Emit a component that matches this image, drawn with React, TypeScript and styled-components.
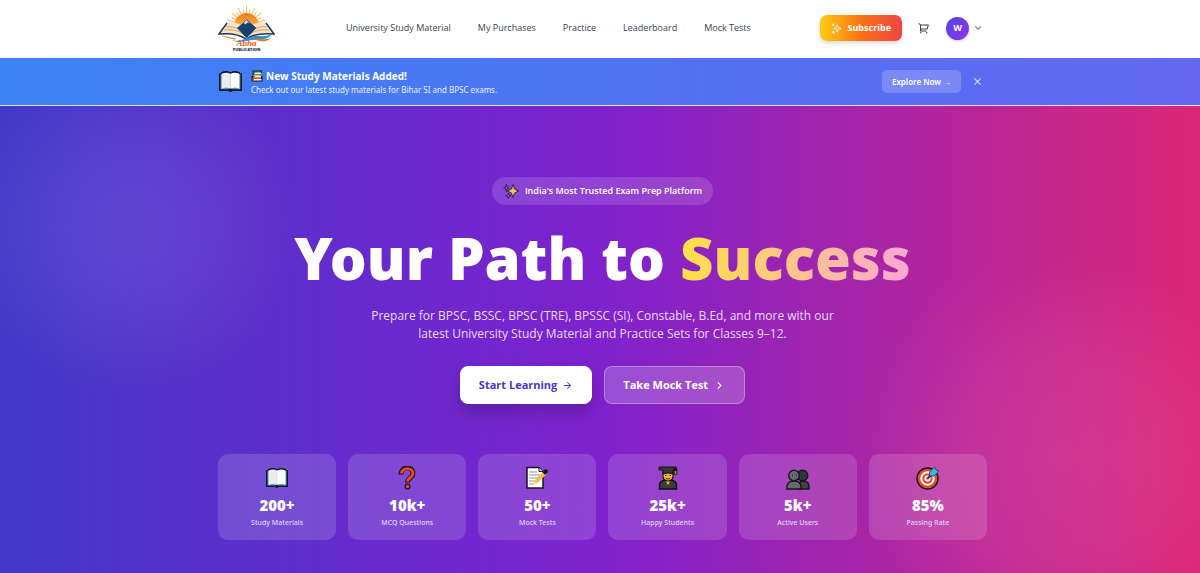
import React from "react";
import styled, { createGlobalStyle } from "styled-components";
import {
  RiArrowDownSLine,
  RiArrowRightLine,
  RiArrowRightSLine,
  RiCloseLine,
  RiShoppingCart2Line,
} from "react-icons/ri";

const GlobalStyle = createGlobalStyle`
  *, *::before, *::after { box-sizing: border-box; }
  body {
    margin: 0;
    background: #ffffff;
    font-family: "Open Sans", "Noto Sans", sans-serif;
    font-size: 9px;
    line-height: 14px;
    color: #374151;
  }
  h1, p { margin: 0; }
  button { font: inherit; border: 0; padding: 0; background: none; color: inherit; cursor: pointer; }
  a { color: inherit; text-decoration: none; }
  svg { display: block; flex: none; }
`;

const Page = styled.div`
  display: flex;
  flex-direction: column;
  min-height: 100vh;
  overflow: hidden;
`;

const Container = styled.div`
  width: 100%;
  max-width: 769px;
  margin: 0 auto;
`;

const Header = styled.header`
  padding-left: 5px;
  background: #ffffff;
`;

const HeaderRow = styled(Container)`
  display: flex;
  align-items: center;
  height: 58px;
  padding: 0 3px 2px 0;
`;

const Nav = styled.nav`
  display: flex;
  gap: 27px;
  margin: 0 auto 0 71px;
  font-weight: 500;
  white-space: nowrap;
`;

const Actions = styled.div`
  display: flex;
  align-items: center;
  gap: 16px;
`;

const SubscribeButton = styled.button`
  display: flex;
  align-items: center;
  justify-content: center;
  gap: 5px;
  height: 26px;
  padding: 0 11px;
  border-radius: 7px;
  background: linear-gradient(90deg, #facc15, #f97316 50%, #ef4444);
  box-shadow: 0 2px 4px rgba(0, 0, 0, 0.16);
  color: #ffffff;
  font-weight: 700;
`;

const IconButton = styled.button`
  display: flex;
  align-items: center;
  justify-content: center;
  color: #374151;
`;

const ProfileButton = styled.button`
  display: flex;
  align-items: center;
  gap: 3px;
  color: #6b7280;
`;

const Avatar = styled.span`
  display: grid;
  place-items: center;
  width: 23px;
  height: 23px;
  border-radius: 50%;
  background: linear-gradient(135deg, #4f46e5, #9333ea);
  box-shadow: 0 1px 3px rgba(0, 0, 0, 0.18);
  color: #ffffff;
  font-weight: 700;
`;

const Banner = styled.section`
  padding-left: 5px;
  border-bottom: 1px solid #dfe3fb;
  background: linear-gradient(90deg, #3b82f6, #6366f1);
  color: #ffffff;
`;

const BannerRow = styled(Container)`
  display: flex;
  align-items: center;
  height: 47px;
  gap: 8px;
  padding-right: 2px;
`;

const BannerCopy = styled.div`
  flex: 1;
  padding-top: 2px;
`;

const BannerTitle = styled.p`
  display: flex;
  align-items: center;
  gap: 3px;
  font-size: 10px;
  font-weight: 700;
`;

const BannerText = styled.p`
  font-family: "Noto Sans", "Open Sans", sans-serif;
  font-size: 8px;
  color: #e8f0ff;
`;

const ExploreButton = styled.button`
  height: 23px;
  padding: 0 10px;
  border-radius: 5px;
  background: rgba(255, 255, 255, 0.2);
  font-family: "Noto Sans", "Open Sans", sans-serif;
  font-size: 8px;
  font-weight: 600;
`;

const CloseButton = styled(IconButton)`
  width: 16px;
  height: 16px;
  color: #d6ddff;
`;

const Hero = styled.main`
  position: relative;
  flex: 1;
  padding: 71px 0 33px 5px;
  background: linear-gradient(90deg, #4338ca, #7e22ce 50%, #db2777);
  color: #ffffff;
  overflow: hidden;
`;

const Glow = styled.div<{ $side: "left" | "right" }>`
  position: absolute;
  border-radius: 50%;
  pointer-events: none;
  ${({ $side }) =>
    $side === "left"
      ? `left: -40px; top: -50px; width: 340px; height: 340px;
         background: radial-gradient(closest-side, rgba(255,255,255,0.09), rgba(255,255,255,0.06) 45%, transparent);`
      : `right: -60px; bottom: -90px; width: 410px; height: 410px;
         background: radial-gradient(closest-side, rgba(244,114,182,0.20), rgba(244,114,182,0.15) 50%, transparent);`}
`;

const HeroBody = styled(Container)`
  position: relative;
  display: flex;
  flex-direction: column;
  align-items: center;
  text-align: center;
`;

const Pill = styled.div`
  display: flex;
  align-items: center;
  gap: 6px;
  height: 28px;
  padding: 0 11px;
  border-radius: 14px;
  background: rgba(255, 255, 255, 0.15);
  font-weight: 600;
`;

const Title = styled.h1`
  margin-top: 21px;
  font-family: "Noto Sans", "Open Sans", sans-serif;
  font-size: 58px;
  font-weight: 900;
  line-height: 64px;
  white-space: nowrap;
`;

const Highlight = styled.span`
  background: linear-gradient(90deg, #fde047, #f9a8d4);
  background-clip: text;
  -webkit-background-clip: text;
  color: transparent;
`;

const Lead = styled.p`
  max-width: 490px;
  margin-top: 17px;
  font-size: 12px;
  line-height: 18px;
  color: #e9dcfc;
`;

const ButtonRow = styled.div`
  display: flex;
  gap: 12px;
  margin-top: 23px;
`;

const HeroButton = styled.button<{ $primary?: boolean }>`
  display: flex;
  align-items: center;
  gap: 5px;
  height: 38px;
  padding: 0 18px;
  border: 1px solid ${({ $primary }) => ($primary ? "#ffffff" : "rgba(255,255,255,0.3)")};
  border-radius: 8px;
  background: ${({ $primary }) => ($primary ? "#ffffff" : "rgba(255,255,255,0.2)")};
  box-shadow: ${({ $primary }) => ($primary ? "0 8px 16px rgba(0,0,0,0.2)" : "none")};
  color: ${({ $primary }) => ($primary ? "#4338ca" : "#ffffff")};
  font-size: 11px;
  font-weight: 700;
`;

const Stats = styled.div`
  display: grid;
  grid-template-columns: repeat(6, 1fr);
  gap: 12px;
  width: 100%;
  margin-top: 50px;
`;

const StatCard = styled.div`
  display: flex;
  flex-direction: column;
  align-items: center;
  height: 86px;
  padding-top: 12px;
  border-radius: 10px;
  background: rgba(255, 255, 255, 0.15);
`;

const StatValue = styled.strong`
  margin-top: 5px;
  font-family: "Noto Sans", "Open Sans", sans-serif;
  font-size: 15px;
  font-weight: 900;
  line-height: 20px;
`;

const StatLabel = styled.span`
  margin-top: 1px;
  font-family: "Noto Sans", "Open Sans", sans-serif;
  font-size: 7px;
  font-weight: 500;
  color: #dfd5fc;
`;

const Logo = () => (
  <svg width="57" height="48" viewBox="0 0 57 48" role="img" aria-label="Abha Publication">
    <defs>
      <linearGradient id="sun" x1="0" y1="0" x2="0" y2="1">
        <stop offset="0" stopColor="#f4741c" />
        <stop offset="1" stopColor="#fdc94a" />
      </linearGradient>
    </defs>
    <g stroke="#f9bd58" strokeWidth="1">
      {[-84, -72, -60, -48, -36, -24, -12, 0, 12, 24, 36, 48, 60, 72, 84].map((a, i) => (
        <path key={a} d={i % 2 ? "M28.500 9V2" : "M28.500 9V5"} transform={`rotate(${a} 28.500 22)`} />
      ))}
    </g>
    <path d="M16 22a12.500 13 0 0 1 25 0v4H16z" fill="url(#sun)" />
    <path d="M9 19c8-2 15 1 19.500 8C33 20 40 17 48 19l8 11c-10-1-20 0-27.500 5C21 30 11 29 1 30z" fill="#f8e4c4" />
    <path d="M9 19 1 30c10-1 20 0 27 5 7-5 17-6 28-5l-8-11" fill="none" stroke="#173a63" strokeWidth="1.500" />
    <path d="M8 23c9-1 16 2 20.500 9 5-7 12-10 20.500-9M6 26c10-1 17 1 22.500 7 6-6 13-8 22.500-7" fill="none" stroke="#b5854d" strokeWidth=".7" />
    <path d="M19 24l6-5 3.500-4 4 4 6 5-10 10z" fill="#17406f" />
    <path d="M25.500 19l3-3.500 3 4-2-1-1.500 2z" fill="#b7d7ed" />
    <path d="M12 35c9 5 16-2 25-3 6 0 12 1 17-2-5 7-13 5-20 6-7 1-14 4-22-1z" fill="#2990cf" />
    <path d="M33 35c8-2 12 2 20-1-5 5-11 3-20 1z" fill="#f06b21" />
    <path d="M4 32c5 0 9 3 14 3" fill="none" stroke="#e88b3c" strokeWidth="1.200" />
    <text x="28.500" y="42" textAnchor="middle" fontFamily="Liberation Serif, serif" fontStyle="italic" fontWeight="700" fontSize="9" fill="#ed5b22">Abha</text>
    <text x="28.500" y="47" textAnchor="middle" fontFamily="Open Sans, sans-serif" fontWeight="800" fontSize="4" fill="#1b2c53">PUBLICATION</text>
  </svg>
);

const SubscribeIcon = () => (
  <svg width="11" height="11" viewBox="0 0 24 24" fill="none" stroke="currentColor" strokeWidth="2" aria-hidden="true">
    <path d="M14 4l2 6 6 2-6 2-2 6-2-6-6-2 6-2z" />
    <path d="M5 1v6M2 4h6M5 17v6M2 20h6" />
  </svg>
);

const BookIcon = ({ size = 24 }: { size?: number }) => (
  <svg width={size} height={size} viewBox="0 0 24 24" aria-hidden="true">
    <path d="M1 4h2V3q5-2 9 0 4-2 9 0v1h2v17h-9l-2 1-2-1H1z" fill="#101820" />
    <path d="M2.500 5H4v13h7v1.500H2.500zM21.500 5H20v13h-7v1.500h8.500z" fill="#4b9fc3" />
    <path d="M3.500 4.500q5-2 8.500 0V19q-3.500-2-8.500 0z" fill="#e9ebed" />
    <path d="M12 4.500q4-2 8.500 0V19q-4.500-2-8.500 0z" fill="#ffffff" />
    <path d="M12 5v13" stroke="#d9dde0" strokeWidth=".7" />
  </svg>
);

const BooksIcon = () => (
  <svg width="12" height="12" viewBox="0 0 24 24" aria-hidden="true">
    <path d="M3 1h19v5h-2v6h3v11H1V12h2z" fill="#171b20" />
    <path d="M5 3h15v2H6v3h13v2H5z" fill="#47a35a" />
    <path d="M7 5h13v3H7zM8 12h12v3H8zM5 18h16v3H5z" fill="#f6f3e8" />
    <path d="M5 10h15v2H7v3h13v1H5z" fill="#f0b73f" />
    <path d="M3 16h17v2H5v4H3z" fill="#e64b35" />
  </svg>
);

const QuestionIcon = () => (
  <svg width="24" height="24" viewBox="0 0 24 24" fill="none" aria-hidden="true">
    <path d="M6 8.500C6 0 18 0 18 7.500c0 4-5.500 4.500-5.500 9" stroke="#16181b" strokeWidth="5" />
    <circle cx="12.500" cy="20.500" r="3" fill="#16181b" />
    <path d="M6.500 7.500C7 1 18 1 18 7.500c0 4-5.500 4.500-5.500 8" stroke="#ea4728" strokeWidth="3" />
    <circle cx="12.500" cy="20.500" r="1.800" fill="#ea4728" />
  </svg>
);

const MemoIcon = () => (
  <svg width="24" height="24" viewBox="0 0 24 24" aria-hidden="true">
    <path d="M2 1.500h12l4 4V22H2z" fill="#ffffff" stroke="#16181b" strokeWidth="1.500" />
    <path d="M14 1.500v4h4" fill="#d6d9db" stroke="#16181b" />
    <path d="M4 6h8M4 9h11M4 12h10M4 15h6M4 18h5" stroke="#85888c" strokeWidth=".9" />
    <path d="M8 19l2-5 9-9 3 3-10 9z" fill="#f3bd42" />
    <path d="M17.500 6l2-2.500q3.500-1 3.500 2.500l-3 3z" fill="#111820" />
    <path d="M8 19l2-4 2 2z" fill="#f6dca3" />
  </svg>
);

const StudentIcon = () => (
  <svg width="24" height="24" viewBox="0 0 24 24" aria-hidden="true">
    <path d="M3.500 23v-4q0-4 6-5h5q6 1 6 5v4z" fill="#393b3e" stroke="#111315" strokeWidth="1.500" />
    <path d="M9 14l3 5 3-5z" fill="#f7b92d" />
    <path d="M7 6h10v5q-1 4-5 4t-5-4z" fill="#f9b62c" stroke="#171a1c" strokeWidth="1.200" />
    <path d="M9 9.500h1.500M13.500 9.500H15M10 12.500q2 1 4 0" stroke="#211d18" strokeWidth=".9" fill="none" />
    <path d="M3 1h17v3h-3v4q-5-2-10 0V4H3z" fill="#34373a" stroke="#111315" />
    <path d="M19.500 2v7" stroke="#111315" strokeWidth="3.500" />
    <path d="M19.500 5v3.500" stroke="#c98525" strokeWidth="1.800" />
  </svg>
);

const UsersIcon = () => (
  <svg width="24" height="24" viewBox="0 0 24 24" stroke="#16181b" strokeWidth="1.400" aria-hidden="true">
    <path d="M12 23q0-8 5-8 6 0 6 6v2z" fill="#414447" />
    <circle cx="16.500" cy="9.500" r="5.300" fill="#323539" />
    <path d="M1 23v-3q1-5 7-5t7 5v3z" fill="#66696c" />
    <circle cx="8" cy="9.500" r="5.300" fill="#686b6e" />
    <path d="M6 9.500h.7M10 9.500h.7M15 9.500h.7M19 9.500h.7" />
  </svg>
);

const TargetIcon = () => (
  <svg width="24" height="24" viewBox="0 0 24 24" aria-hidden="true">
    <circle cx="11.500" cy="12.500" r="10.500" fill="#e64a32" stroke="#16181b" strokeWidth="1.400" />
    <circle cx="11.500" cy="12.500" r="6.200" fill="none" stroke="#ffffff" strokeWidth="2" />
    <circle cx="11.500" cy="12.500" r="2.200" fill="none" stroke="#ffffff" strokeWidth="1.700" />
    <path d="M11.500 12.500l5-5" stroke="#173b52" strokeWidth="2" />
    <path d="M13.500 10V6l5-5 1.500 3 3 1-5 5z" fill="#35b7e5" stroke="#173b52" strokeWidth=".8" />
  </svg>
);

const SparklesIcon = () => (
  <svg width="16" height="16" viewBox="0 0 24 24" stroke="#241b36" strokeWidth="1.300" aria-hidden="true">
    <path d="M15 2l2.300 7 6 3-6 3L15 22l-2.300-7-6-3 6-3z" fill="#f0c154" />
    <path d="M5 2l1.300 4 3 1-3 1.300L5 13 3.700 8.300 1 7l2.700-1z" fill="#4c7fc4" />
    <path d="M8 15l1 3 3 1-3 1-1 3-1-3-3-1 3-1z" fill="#a368d8" />
  </svg>
);

const links = ["University Study Material", "My Purchases", "Practice", "Leaderboard", "Mock Tests"];

const stats = [
  { icon: <BookIcon />, value: "200+", label: "Study Materials" },
  { icon: <QuestionIcon />, value: "10k+", label: "MCQ Questions" },
  { icon: <MemoIcon />, value: "50+", label: "Mock Tests" },
  { icon: <StudentIcon />, value: "25k+", label: "Happy Students" },
  { icon: <UsersIcon />, value: "5k+", label: "Active Users" },
  { icon: <TargetIcon />, value: "85%", label: "Passing Rate" },
];

export default function App() {
  return (
    <Page>
      <GlobalStyle />
      <Header>
        <HeaderRow>
          <a href="#home"><Logo /></a>
          <Nav>
            {links.map((link) => <a key={link} href="#section">{link}</a>)}
          </Nav>
          <Actions>
            <SubscribeButton><SubscribeIcon />Subscribe</SubscribeButton>
            <IconButton aria-label="Cart"><RiShoppingCart2Line size={12} /></IconButton>
            <ProfileButton aria-label="Account menu">
              <Avatar>W</Avatar>
              <RiArrowDownSLine size={12} />
            </ProfileButton>
          </Actions>
        </HeaderRow>
      </Header>

      <Banner>
        <BannerRow>
          <BookIcon size={25} />
          <BannerCopy>
            <BannerTitle><BooksIcon />New Study Materials Added!</BannerTitle>
            <BannerText>Check out our latest study materials for Bihar SI and BPSC exams.</BannerText>
          </BannerCopy>
          <ExploreButton>Explore Now →</ExploreButton>
          <CloseButton aria-label="Dismiss"><RiCloseLine size={13} /></CloseButton>
        </BannerRow>
      </Banner>

      <Hero>
        <Glow $side="left" />
        <Glow $side="right" />
        <HeroBody>
          <Pill><SparklesIcon />India's Most Trusted Exam Prep Platform</Pill>
          <Title>Your Path to <Highlight>Success</Highlight></Title>
          <Lead>
            Prepare for BPSC, BSSC, BPSC (TRE), BPSSC (SI), Constable, B.Ed, and more with our
            latest University Study Material and Practice Sets for Classes 9–12.
          </Lead>
          <ButtonRow>
            <HeroButton $primary>Start Learning<RiArrowRightLine size={11} /></HeroButton>
            <HeroButton>Take Mock Test<RiArrowRightSLine size={13} /></HeroButton>
          </ButtonRow>
          <Stats>
            {stats.map((stat) => (
              <StatCard key={stat.label}>
                {stat.icon}
                <StatValue>{stat.value}</StatValue>
                <StatLabel>{stat.label}</StatLabel>
              </StatCard>
            ))}
          </Stats>
        </HeroBody>
      </Hero>
    </Page>
  );
}
